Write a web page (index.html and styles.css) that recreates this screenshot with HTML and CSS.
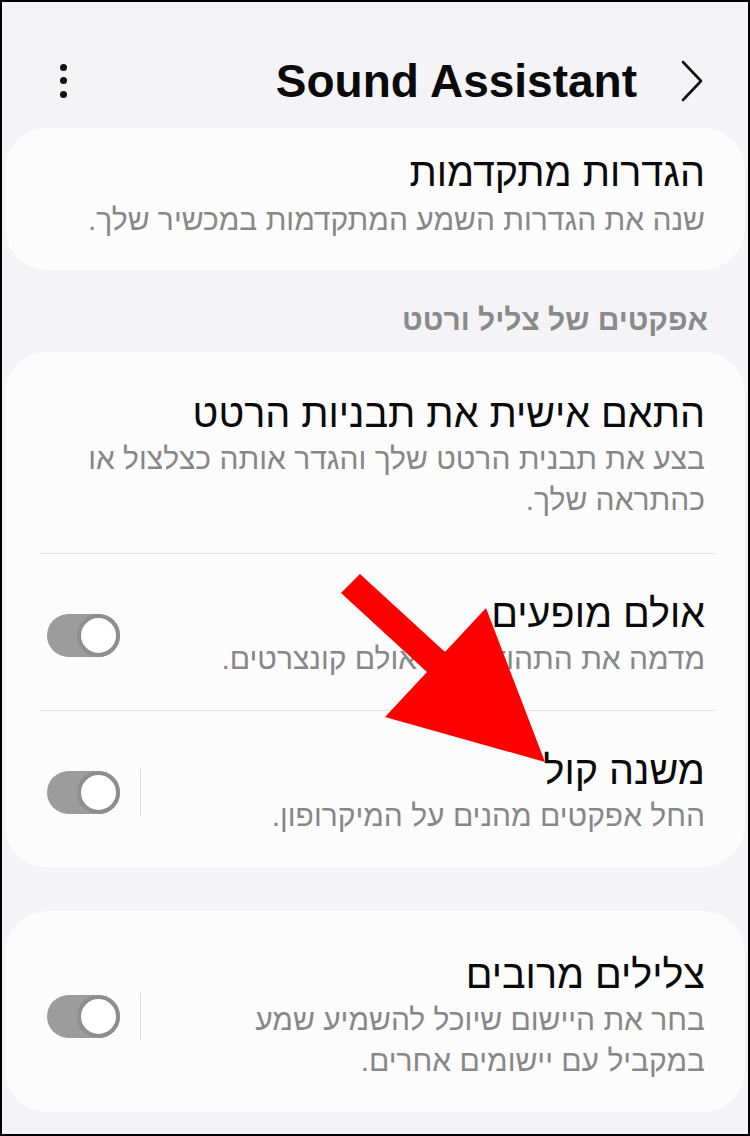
FILE: index.html
```html
<!DOCTYPE html>
<html lang="he">
<head>
    <meta charset="UTF-8">
    <meta name="viewport" content="width=750, initial-scale=1.0">
    <title>Sound Assistant</title>
    <link rel="stylesheet" href="styles.css">
</head>
<body>
    <div class="screen">
        <!-- כותרת עליונה -->
        <header class="topbar">
            <span class="more-btn"><i></i><i></i><i></i></span>
            <div class="title-wrap">
                <h1>Sound Assistant</h1>
                <svg class="chevron" width="24" height="42" viewBox="0 0 24 42">
                    <path d="M3 2 L21 21 L3 40" fill="none" stroke="#111" stroke-width="2.6" stroke-linecap="round" stroke-linejoin="round"/>
                </svg>
            </div>
        </header>

        <main dir="rtl">
            <section class="card card-top">
                <div class="row">
                    <div class="row-text">
                        <div class="row-title">הגדרות מתקדמות</div>
                        <div class="row-sub">שנה את הגדרות השמע המתקדמות במכשיר שלך.</div>
                    </div>
                </div>
            </section>

            <h2 class="section-label">אפקטים של צליל ורטט</h2>

            <section class="card card-mid">
                <div class="row">
                    <div class="row-text">
                        <div class="row-title">התאם אישית את תבניות הרטט</div>
                        <div class="row-sub">בצע את תבנית הרטט שלך והגדר אותה כצלצול או כהתראה שלך.</div>
                    </div>
                </div>
                <div class="divider"></div>
                <div class="row">
                    <div class="row-text">
                        <div class="row-title">אולם מופעים</div>
                        <div class="row-sub">מדמה את התהודה של אולם קונצרטים.</div>
                    </div>
                    <span class="toggle"></span>
                </div>
                <div class="divider"></div>
                <div class="row">
                    <div class="row-text">
                        <div class="row-title">משנה קול</div>
                        <div class="row-sub">החל אפקטים מהנים על המיקרופון.</div>
                    </div>
                    <span class="vline"></span>
                    <span class="toggle"></span>
                </div>
            </section>

            <section class="card card-last">
                <div class="row">
                    <div class="row-text">
                        <div class="row-title">צלילים מרובים</div>
                        <div class="row-sub">בחר את היישום שיוכל להשמיע שמע במקביל עם יישומים אחרים.</div>
                    </div>
                    <span class="vline"></span>
                    <span class="toggle"></span>
                </div>
            </section>
        </main>

        <!-- חץ אדום מעל התוכן -->
        <svg class="red-arrow" width="746" height="1132" viewBox="2 2 746 1132">
            <polygon points="360,574 445,652 486,608 545,762 385,717 427,672 341,593" fill="#ff0000"/>
        </svg>
    </div>
</body>
</html>
```

FILE: styles.css
```css
/* 全体 */
body {
    margin: 0;
    font-family: "Liberation Sans", "DejaVu Sans", sans-serif;
    background-color: #000;
}

.screen {
    position: relative;
    width: 750px;
    height: 1136px;
    box-sizing: border-box;
    border: 2px solid #000;
    background-color: #f4f4f6;
    overflow: hidden;
}

/* ヘッダー */
.topbar {
    display: flex;
    justify-content: space-between;
    align-items: center;
    padding: 31px 44px 0 58px;
    height: 95px;
}

.more-btn {
    display: flex;
    flex-direction: column;
    gap: 6.5px;
}

.more-btn i {
    display: block;
    width: 7px;
    height: 7px;
    border-radius: 50%;
    background-color: #111;
}

.title-wrap {
    display: flex;
    align-items: center;
    gap: 43px;
}

.topbar h1 {
    margin: 0;
    font-size: 46px;
    line-height: 54px;
    font-weight: bold;
    color: #0a0a0a;
}

.chevron {
    display: block;
}

/* カード */
main {
    display: flex;
    flex-direction: column;
}

.card {
    background-color: #fcfcfd;
    border-radius: 42px;
    margin: 0 3px;
}

.card-last {
    margin-top: 44px;
}

.row {
    display: flex;
    align-items: center;
    padding: 37px 40px 31px 42px;
}

.card-mid .row:first-child {
    padding-top: 39px;
    padding-bottom: 33px;
}

.card-top .row {
    padding: 22px 40px 30px 42px;
}

.card-top .row-sub {
    margin-top: 5px;
}

.card-last .row {
    padding: 41px 40px 31px 42px;
}

.row-text {
    flex: 1;
}

.row-title {
    font-size: 39.5px;
    line-height: 44px;
    color: #0a0a0a;
}

.row-sub {
    margin-top: 3px;
    font-size: 30px;
    line-height: 41px;
    color: #878787;
}

.divider {
    height: 1px;
    background-color: #e3e3e5;
    margin: 0 30px 0 35px;
}

.section-label {
    margin: 32px 40px 14px;
    font-size: 30px;
    line-height: 36px;
    font-weight: bold;
    color: #8a8a8a;
}

/* トグル */
.vline {
    width: 1px;
    height: 47px;
    background-color: #d9d9db;
    margin: 0 20px;
}

.toggle {
    position: relative;
    width: 73px;
    height: 43px;
    border-radius: 22px;
    background-color: #9c9c9c;
}

.toggle::after {
    content: "";
    position: absolute;
    top: 0;
    right: 0;
    width: 43px;
    height: 43px;
    box-sizing: border-box;
    border-radius: 50%;
    border: 4px solid #8e8e8e;
    background-color: #fff;
}

.red-arrow {
    position: absolute;
    top: 0;
    left: 0;
}
```
